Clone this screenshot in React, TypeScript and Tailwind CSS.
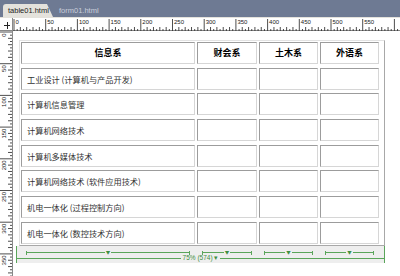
const ROWS = [
  '工业设计 (计算机与产品开发)',
  '计算机信息管理',
  '计算机网络技术',
  '计算机多媒体技术',
  '计算机网络技术 (软件应用技术)',
  '机电一体化 (过程控制方向)',
  '机电一体化 (数控技术方向)',
];

const HEADS = ['财会系', '土木系', '外语系'];

// 50 ruler units = 31.7px on screen
const PX = 31.7 / 50;

function TopRuler() {
  const ticks = [];
  for (let u = 0; u <= 620; u += 5) {
    const x = 1 + u * PX;
    const h = u % 50 === 0 ? 12 : u % 10 === 0 ? 4 : 2;
    ticks.push(<line key={u} x1={x} x2={x} y1={13 - h} y2={13} stroke="#222" strokeWidth={0.8} />);
    if (u % 50 === 0 && u <= 550)
      ticks.push(
        <text key={'t' + u} x={x + 1.5} y={6} fontSize={6} fill="#222" fontFamily="'Liberation Sans', sans-serif">
          {u}
        </text>,
      );
  }
  return (
    <svg width={387} height={13} className="block">
      {ticks}
    </svg>
  );
}

function LeftRuler() {
  const ticks = [];
  for (let u = 0; u <= 400; u += 5) {
    const y = 1 + u * PX;
    const w = u % 50 === 0 ? 12 : u % 10 === 0 ? 4 : 2;
    ticks.push(<line key={u} x1={12 - w} x2={12} y1={y} y2={y} stroke="#222" strokeWidth={0.8} />);
    if (u % 50 === 0 && u <= 350)
      ticks.push(
        <text
          key={'t' + u}
          x={0}
          y={0}
          fontSize={6}
          fill="#222"
          fontFamily="'Liberation Sans', sans-serif"
          transform={`translate(6 ${y + 1.5}) rotate(-90)`}
          textAnchor="end"
        >
          {u}
        </text>,
      );
  }
  return (
    <svg width={13} height={245} className="block">
      {ticks}
    </svg>
  );
}

function Cell({ children, className = '' }: { children?: React.ReactNode; className?: string }) {
  return (
    <div
      className={
        'flex h-[22px] items-center border border-t-[#9c9c9c] border-l-[#9c9c9c] border-r-[#d6d6d6] border-b-[#d6d6d6] bg-white ' +
        className
      }
    >
      {children}
    </div>
  );
}

function ColBar({ w }: { w: string }) {
  return (
    <div className={'flex items-center justify-center ' + w}>
      <div className="flex w-full items-center px-[5px]">
        <div className="h-[4px] w-px bg-[#5aa55a]" />
        <div className="h-px flex-1 bg-[#5aa55a]" />
        <span className="mx-px text-[4.5px] leading-none text-[#3f8f3f]">▼</span>
        <div className="h-px flex-1 bg-[#5aa55a]" />
        <div className="h-[4px] w-px bg-[#5aa55a]" />
      </div>
    </div>
  );
}

export default function App() {
  return (
    <div className="flex h-[276px] w-[400px] flex-col overflow-hidden bg-white font-['Noto_Sans_CJK_SC',sans-serif]">
      {/* document tabs */}
      <div className="flex h-[17px] items-end bg-[#6e7a93] pl-[3px] font-['Liberation_Sans',sans-serif]">
        <div className="flex h-[13px] w-[50px] items-center rounded-tl-[3px] bg-[#e4e2dc] pl-[5px] text-[7.5px] text-[#222] [clip-path:polygon(0_0,88%_0,100%_100%,0_100%)]">
          table01.html
        </div>
        <div className="flex h-[13px] items-center pl-[6px] text-[7.5px] text-[#c9cedb]">form01.html</div>
      </div>
      <div className="h-[1px] bg-[#e4e2dc]" />

      {/* rulers */}
      <div className="flex h-[13px] border-b border-[#888]">
        <div className="relative w-[13px] border-r border-[#888] bg-white">
          <div className="absolute left-[4px] top-[7px] h-px w-[6px] bg-[#222]" />
          <div className="absolute left-[7px] top-[4px] h-[7px] w-px bg-[#222]" />
        </div>
        <TopRuler />
      </div>

      <div className="flex flex-1">
        <div className="w-[13px] border-r border-[#888]">
          <LeftRuler />
        </div>

        <div className="flex-1 pl-[6px] pt-[9px]">
          {/* table */}
          <div className="w-[366px] border border-t-[#e2e2e2] border-l-[#e2e2e2] border-r-[#a8a8a8] border-b-[#a8a8a8] bg-white p-px">
            <div className="grid grid-cols-[174px_60px_59px_59px] gap-x-[2px] gap-y-[3.7px]">
              <Cell className="justify-center text-[9px] font-bold text-black">信息系</Cell>
              {HEADS.map((h) => (
                <Cell key={h} className="justify-center text-[9px] font-bold text-black">
                  {h}
                </Cell>
              ))}
              {ROWS.map((r, i) => (
                <div key={i} className="contents">
                  <Cell className="pl-[5px] text-[8.2px] text-[#333]">{r}</Cell>
                  <Cell />
                  <Cell />
                  <Cell />
                </div>
              ))}
            </div>
          </div>

          {/* width indicator */}
          <div className="-ml-[3px] flex h-[17px] w-[369px] flex-col border-x border-[#5aa55a] bg-[#eeeeee]">
            <div className="flex h-[9px] items-end gap-x-[2px] pl-[4px]">
              <ColBar w="w-[174px]" />
              <ColBar w="w-[60px]" />
              <ColBar w="w-[59px]" />
              <ColBar w="w-[59px]" />
            </div>
            <div className="flex h-[7px] items-center">
              <div className="h-px flex-1 bg-[#5aa55a]" />
              <span className="px-[2px] font-['Liberation_Sans',sans-serif] text-[6.5px] leading-none text-[#3f8f3f]">
                75% (574) ▾
              </span>
              <div className="h-px flex-1 bg-[#5aa55a]" />
            </div>
          </div>
        </div>
      </div>
    </div>
  );
}
